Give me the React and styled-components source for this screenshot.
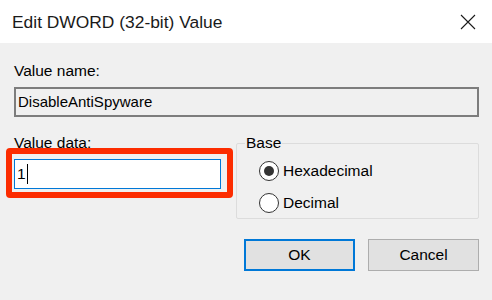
import React from 'react';
import styled, { createGlobalStyle } from 'styled-components';

const GlobalStyle = createGlobalStyle`
  html, body {
    margin: 0;
    padding: 0;
    background: #f0f0f0;
  }
  body {
    font-family: "Liberation Sans", Arial, sans-serif;
    color: #000;
  }
`;

const Dialog = styled.div`
  width: 492px;
  height: 300px;
  background: #f0f0f0;
  overflow: hidden;
`;

const TitleBar = styled.div`
  height: 43px;
  background: #ffffff;
  display: flex;
  align-items: center;
  justify-content: space-between;
  padding: 0 16px 0 12px;
`;

const Title = styled.div`
  font-size: 17.4px;
  color: #1a1a1a;
  padding-top: 1px;
`;

const CloseButton = styled.div`
  width: 16px;
  height: 16px;
  display: flex;
  margin-top: 1px;
`;

const Body = styled.div`
  padding: 19px 13px 0 14px;
`;

const Label = styled.div`
  font-size: 15.5px;
  line-height: 18px;
  height: 18px;
`;

const NameField = styled.div`
  margin-top: 7px;
  height: 26px;
  border: 2px solid #7d7d7d;
  background: #f0f0f0;
  font-size: 15px;
  line-height: 26px;
  padding-left: 2px;
`;

const Row = styled.div`
  display: flex;
  margin-top: 17px;
`;

const DataColumn = styled.div`
  width: 207px;
`;

// red annotation frame drawn over the input
const Highlight = styled.div`
  position: relative;
  margin-top: 7px;

  &::after {
    content: "";
    position: absolute;
    top: -11px;
    left: -8px;
    right: -12px;
    bottom: -9px;
    border: 6px solid #fc2c00;
    border-radius: 4px;
    pointer-events: none;
  }
`;

const DataInput = styled.div`
  height: 28px;
  border: 1px solid #0078d7;
  background: #ffffff;
  display: flex;
  align-items: center;
  padding-left: 2px;
  font-size: 15.5px;
`;

const Caret = styled.span`
  display: inline-block;
  width: 1px;
  height: 20px;
  background: #000;
  margin-left: 1px;
`;

const BaseGroup = styled.fieldset`
  margin: 0 0 0 15px;
  flex: 1;
  height: 85px;
  box-sizing: border-box;
  border: 1px solid #dcdcdc;
  border-radius: 2px;
  padding: 9px 0 0 22px;
  display: flex;
  flex-direction: column;
  gap: 12px;
`;

const Legend = styled.legend`
  font-size: 15.5px;
  line-height: 18px;
  padding: 0 1px;
  margin-left: -14px;
`;

const RadioRow = styled.div`
  display: flex;
  align-items: center;
  gap: 4px;
  height: 20px;
  font-size: 15.5px;
`;

const RadioCircle = styled.span`
  width: 18px;
  height: 18px;
  border: 1px solid #333333;
  border-radius: 50%;
  background: #ffffff;
  display: flex;
  align-items: center;
  justify-content: center;

  &::after {
    content: "";
    width: 10px;
    height: 10px;
    border-radius: 50%;
    background: ${props => (props.checked ? '#333333' : 'transparent')};
  }
`;

const ButtonRow = styled.div`
  display: flex;
  justify-content: flex-end;
  gap: 13px;
  margin-top: 20px;
`;

const Button = styled.div`
  width: 111px;
  height: 32px;
  box-sizing: border-box;
  background: #e1e1e1;
  border: ${props => (props.primary ? '2px solid #0078d7' : '1px solid #adadad')};
  display: flex;
  align-items: center;
  justify-content: center;
  font-size: 15.5px;
`;

const Radio = ({ checked, children }) => (
  <RadioRow>
    <RadioCircle checked={checked} />
    {children}
  </RadioRow>
);

export default function App() {
  return (
    <Dialog>
      <GlobalStyle />
      <TitleBar>
        <Title>Edit DWORD (32-bit) Value</Title>
        <CloseButton>
          <svg width="16" height="16" viewBox="0 0 16 16">
            <path d="M1 1 L15 15 M15 1 L1 15" stroke="#1a1a1a" strokeWidth="1.1" fill="none" />
          </svg>
        </CloseButton>
      </TitleBar>
      <Body>
        <Label>Value name:</Label>
        <NameField>DisableAntiSpyware</NameField>
        <Row>
          <DataColumn>
            <Label>Value data:</Label>
            <Highlight>
              <DataInput>
                1<Caret />
              </DataInput>
            </Highlight>
          </DataColumn>
          <BaseGroup>
            <Legend>Base</Legend>
            <Radio checked>Hexadecimal</Radio>
            <Radio>Decimal</Radio>
          </BaseGroup>
        </Row>
        <ButtonRow>
          <Button primary>OK</Button>
          <Button>Cancel</Button>
        </ButtonRow>
      </Body>
    </Dialog>
  );
}
